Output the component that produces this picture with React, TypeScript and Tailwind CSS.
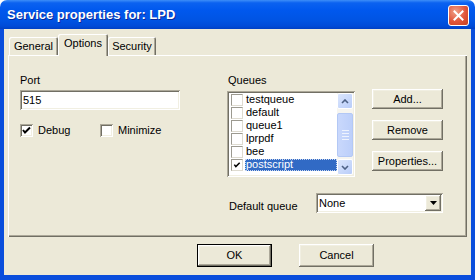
import { ReactNode } from 'react'

// classic 3D edges in the XP beige scheme
const raised =
  'shadow-[inset_-1px_-1px_0_#716f64,inset_1px_1px_0_#ffffff,inset_-2px_-2px_0_#aca899,inset_2px_2px_0_#f1efe2]'
const sunken =
  'shadow-[inset_1px_1px_0_#aca899,inset_-1px_-1px_0_#ffffff,inset_2px_2px_0_#716f64,inset_-2px_-2px_0_#f1efe2]'

const queues = ['testqueue', 'default', 'queue1', 'lprpdf', 'bee', 'postscript']

function Check({ size = 13 }: { size?: number }) {
  return (
    <svg width={size} height={size} viewBox="0 0 13 13">
      <polyline points="3,6 5,8.5 10,3.5" fill="none" stroke="#000" strokeWidth="2" />
    </svg>
  )
}

function CheckBox({ checked, label }: { checked?: boolean; label: string }) {
  return (
    <div className="flex items-center h-[13px]">
      <div className={`w-[13px] h-[13px] bg-white flex-none ${sunken}`}>{checked && <Check />}</div>
      <span className="ml-[5px] leading-[13px]">{label}</span>
    </div>
  )
}

function Button({ children, isDefault }: { children: ReactNode; isDefault?: boolean }) {
  return (
    <div className={isDefault ? 'border border-black w-[75px] h-[23px]' : 'w-[75px] h-[23px]'}>
      <div className={`w-full h-full flex items-center justify-center bg-[#ece9d8] ${raised}`}>{children}</div>
    </div>
  )
}

function SideButton({ children }: { children: ReactNode }) {
  return (
    <div className={`w-[71px] h-[20px] flex items-center justify-center bg-[#ece9d8] ${raised}`}>{children}</div>
  )
}

function ScrollArrow({ up }: { up?: boolean }) {
  return (
    <div className="h-[16px] rounded-[2px] border border-white bg-[linear-gradient(135deg,#dbe6fd,#b9cdf9)] flex items-center justify-center">
      <svg width="8" height="5" viewBox="0 0 8 5">
        <polyline
          points={up ? '1,4 4,1 7,4' : '1,1 4,4 7,1'}
          fill="none"
          stroke="#4d6185"
          strokeWidth="1.6"
        />
      </svg>
    </div>
  )
}

export default function App() {
  return (
    <div className="w-[475px] h-[280px] flex flex-col bg-white font-['Liberation_Sans',Arial,sans-serif] text-[11px] text-black select-none">
      {/* title bar */}
      <div className="h-[29px] flex-none flex items-center justify-between pl-[7px] pr-[6px] rounded-t-[7px] bg-[linear-gradient(to_bottom,#3d8ef8_0%,#0b62f0_10%,#0058ee_35%,#0054e3_70%,#004bd8_90%,#0040c4_100%)]">
        <span className="text-white font-bold text-[13px] [text-shadow:1px_1px_0_#0a2a9a]">
          Service properties for: LPD
        </span>
        <div className="mt-[1px] w-[21px] h-[21px] rounded-[3px] border border-white bg-[radial-gradient(circle_at_35%_30%,#f0a088,#e0553a_55%,#c8401f)] flex items-center justify-center">
          <svg width="11" height="11" viewBox="0 0 11 11">
            <path d="M1.5 1.5 L9.5 9.5 M9.5 1.5 L1.5 9.5" stroke="#fff" strokeWidth="2" strokeLinecap="square" />
          </svg>
        </div>
      </div>

      {/* window body */}
      <div className="flex-1 flex flex-col bg-[#ece9d8] border-x-4 border-b-[5px] border-[#0a4edc]">
        {/* tabs */}
        <div className="h-[26px] flex items-end pl-[5px]">
          <div className="w-[49px] h-[18px] flex items-center justify-center rounded-t-[2px] shadow-[inset_1px_1px_0_#ffffff,inset_-1px_0_0_#716f64,inset_-2px_0_0_#aca899]">
            General
          </div>
          <div className="relative z-10 -mb-px w-[50px] h-[22px] pb-[3px] flex items-center justify-center bg-[#ece9d8] rounded-t-[2px] shadow-[inset_1px_1px_0_#ffffff,inset_-1px_0_0_#716f64,inset_-2px_0_0_#aca899]">
            Options
          </div>
          <div className="w-[48px] h-[18px] flex items-center justify-center rounded-t-[2px] shadow-[inset_1px_1px_0_#ffffff,inset_-1px_0_0_#716f64,inset_-2px_0_0_#aca899]">
            Security
          </div>
        </div>

        {/* tab panel */}
        <div className="mx-[4px] h-[182px] flex pt-[19px] pl-[12px] shadow-[inset_1px_1px_0_#ffffff,inset_-1px_-1px_0_#716f64,inset_-2px_-2px_0_#aca899]">
          <div className="w-[160px] flex flex-col">
            <span className="h-[13px] leading-[13px]">Port</span>
            <div className={`mt-[3px] h-[20px] bg-white flex items-center pl-[3px] ${sunken}`}>515</div>
            <div className="mt-[14px] flex">
              <div className="w-[80px]">
                <CheckBox checked label="Debug" />
              </div>
              <CheckBox label="Minimize" />
            </div>
          </div>

          <div className="ml-[47px] flex flex-col">
            <div className="flex">
              <div className="flex flex-col w-[128px]">
                <span className="h-[13px] leading-[13px] pl-[1px]">Queues</span>
                <div className={`mt-[4px] h-[86px] bg-white p-[2px] flex ${sunken}`}>
                  <div className="flex-1 flex flex-col">
                    {queues.map((q, i) => {
                      const selected = i === queues.length - 1
                      return (
                        <div key={q} className="h-[13px] flex items-center pl-[2px]">
                          <div className="w-[12px] h-[12px] flex-none bg-white border border-t-[#9c9a90] border-l-[#9c9a90] border-r-[#dedbd0] border-b-[#dedbd0]">
                            {selected && <Check size={10} />}
                          </div>
                          <span
                            className={
                              selected
                                ? 'ml-[2px] flex-1 h-[12px] leading-[11px] pl-[1px] bg-[#316ac5] text-white outline-1 outline-dotted outline-[#c8d6f0] -outline-offset-1'
                                : 'ml-[2px] flex-1 h-[12px] leading-[11px] pl-[1px]'
                            }
                          >
                            {q}
                          </span>
                        </div>
                      )
                    })}
                  </div>
                  <div className="w-[16px] flex flex-col bg-[#f6f5f0]">
                    <ScrollArrow up />
                    <div className="flex-1 pt-[4px] pb-[1px]">
                      <div className="h-[44px] rounded-[2px] border border-[#b3c8f5] bg-[linear-gradient(90deg,#c9d8fc,#bccffa)] flex flex-col items-center justify-center gap-[2px]">
                        <div className="w-[7px] h-px bg-[#eef3fe]" />
                        <div className="w-[7px] h-px bg-[#eef3fe]" />
                        <div className="w-[7px] h-px bg-[#eef3fe]" />
                        <div className="w-[7px] h-px bg-[#eef3fe]" />
                      </div>
                    </div>
                    <ScrollArrow />
                  </div>
                </div>
              </div>
              <div className="ml-[17px] flex flex-col pt-[15px] gap-[11px]">
                <SideButton>Add...</SideButton>
                <SideButton>Remove</SideButton>
                <SideButton>Properties...</SideButton>
              </div>
            </div>

            <div className="mt-[16px] flex items-start">
              <span className="w-[89px] pl-[2px] mt-[7px] leading-[13px]">Default queue</span>
              <div className={`w-[127px] h-[20px] bg-white flex items-center p-[2px] ${sunken}`}>
                <span className="flex-1 pl-[1px]">None</span>
                <div className={`w-[16px] h-[16px] bg-[#ece9d8] flex items-center justify-center ${raised}`}>
                  <svg width="7" height="4" viewBox="0 0 7 4">
                    <path d="M0 0 H7 L3.5 4 Z" fill="#000" />
                  </svg>
                </div>
              </div>
            </div>
          </div>
        </div>

        {/* dialog buttons */}
        <div className="mt-[7px] flex pl-[193px] gap-[27px]">
          <Button isDefault>OK</Button>
          <Button>Cancel</Button>
        </div>
      </div>
    </div>
  )
}
